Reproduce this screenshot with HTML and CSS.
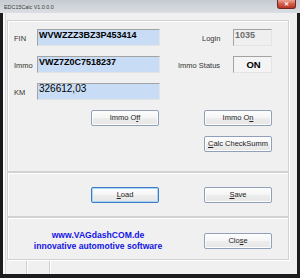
FILE: index.html
```html
<!DOCTYPE html>
<html lang="en">
<head>
    <meta charset="UTF-8">
    <title>EDC15Calc V1.0.0.0</title>
    <link rel="stylesheet" href="styles.css">
</head>
<body>
    <div class="window">
        <div class="titlebar">
            <span class="title">EDC15Calc V1.0.0.0</span>
            <span class="close">&#x2715;</span>
        </div>
        <div class="client">
            <div class="panels">
                <div class="panel panel-main">
                    <div class="field-row">
                        <span class="lbl">FIN</span>
                        <div class="entry bold">WVWZZZ3BZ3P453414</div>
                        <span class="side-lbl login">Login</span>
                        <div class="readonly">1035</div>
                    </div>
                    <div class="field-row">
                        <span class="lbl">Immo</span>
                        <div class="entry bold">VWZ7Z0C7518237</div>
                        <span class="side-lbl">Immo Status</span>
                        <div class="status-box">ON</div>
                    </div>
                    <div class="field-row">
                        <span class="lbl">KM</span>
                        <div class="entry km">326612,03</div>
                    </div>
                    <div class="btn-row first">
                        <button class="btn">Immo O<u>f</u>f</button>
                        <button class="btn">Immo O<u>n</u></button>
                    </div>
                    <div class="btn-row right-only">
                        <button class="btn"><u>C</u>alc CheckSumm</button>
                    </div>
                </div>
                <div class="panel panel-file">
                    <div class="btn-row">
                        <button class="btn default"><u>L</u>oad</button>
                        <button class="btn"><u>S</u>ave</button>
                    </div>
                </div>
                <div class="panel panel-info">
                    <div class="promo">
                        <div>www.VAGdashCOM.de</div>
                        <div>innovative automotive software</div>
                    </div>
                    <button class="btn close-btn">Clo<u>s</u>e</button>
                </div>
            </div>
            <div class="statusbar">
                <span class="seg seg1"></span>
                <span class="seg seg2"></span>
                <span class="seg seg3"></span>
            </div>
        </div>
    </div>
</body>
</html>
```

FILE: styles.css
```css
body {
    margin: 0;
    padding: 0;
    font-family: "Liberation Sans", Arial, sans-serif;
}
.window {
    width: 300px;
    height: 278px;
    display: flex;
    flex-direction: column;
    background: #1c1c1e;
}
.titlebar {
    height: 13px;
    flex-shrink: 0;
    display: flex;
    align-items: flex-start;
    padding-left: 4px;
    background: linear-gradient(#c6cbd1, #dadee3);
}
.title {
    font-size: 5.4px;
    color: #3a3a3a;
    margin-top: 4px;
}
.close {
    margin-left: auto;
    margin-right: 4px;
    width: 19px;
    height: 9px;
    box-sizing: border-box;
    border: 1px solid #6a2a24;
    border-top: none;
    border-radius: 0 0 3px 3px;
    background: linear-gradient(#eba596, #d45a48 50%, #b83524);
    color: #fff;
    font-size: 6px;
    font-weight: bold;
    line-height: 8px;
    text-align: center;
}
.client {
    flex: 1;
    margin: 0 3px 4px;
    display: flex;
    flex-direction: column;
    background: #f0f0f0;
    box-shadow: inset 2px 0 0 #fafafa, inset 3px 0 0 #d8d8d8;
}
.panels {
    padding: 7px 8px 0 4px;
}
.panel {
    box-sizing: border-box;
    border: 1px solid #d2d2d2;
    box-shadow: inset 1px 1px 0 #fff, 1px 1px 0 #fff;
}
.panel-main {
    height: 152px;
    padding-top: 8px;
}
.panel-file {
    height: 45px;
    padding-top: 14px;
}
.panel-info {
    height: 43px;
    padding-top: 4px;
    display: flex;
    align-items: center;
}
.field-row {
    display: flex;
    height: 17px;
    margin-bottom: 10px;
}
.lbl, .side-lbl {
    font-size: 7.5px;
    color: #333;
    align-self: center;
    padding-top: 2px;
}
.lbl {
    width: 29px;
    padding-left: 6px;
    box-sizing: border-box;
}
.side-lbl {
    width: 55px;
    margin-left: 18px;
    box-sizing: border-box;
}
.side-lbl.login {
    padding-left: 24px;
}
.entry, .readonly, .status-box {
    height: 17px;
    box-sizing: border-box;
    border: 1px solid;
    border-color: #a3a3a3 #e4e4e4 #e4e4e4 #a3a3a3;
    line-height: 10px;
    white-space: nowrap;
}
.entry {
    width: 123px;
    padding-left: 1px;
    background: #c8ddf5;
    color: #000;
    font-size: 9px;
}
.entry.bold {
    font-weight: bold;
}
.entry.km {
    font-size: 10px;
}
.readonly {
    width: 39px;
    padding-left: 1px;
    background: #efefef;
    color: #6d6d6d;
    font-size: 9px;
    font-weight: bold;
}
.status-box {
    width: 39px;
    background: #f4f4f4;
    font-size: 9.5px;
    font-weight: bold;
    line-height: 15px;
    text-align: center;
    padding-left: 2px;
}
.btn-row {
    display: flex;
    gap: 45px;
    padding-left: 83px;
    margin-bottom: 10px;
}
.btn-row.first {
    margin-top: 7px;
}
.btn-row.right-only {
    padding-left: 196px;
}
.btn {
    width: 68px;
    height: 16px;
    padding: 0;
    box-sizing: border-box;
    border: 1px solid #8fa0b8;
    border-radius: 2px;
    background: linear-gradient(#fdfdfd, #f5f5f5 50%, #ededed 51%, #e6e6e6);
    box-shadow: inset 0 0 0 1px #fdfdfd;
    font-family: "Liberation Sans", Arial, sans-serif;
    font-size: 7.5px;
    color: #222;
    line-height: 14px;
}
.btn.default {
    border-color: #3d7bc4;
    box-shadow: inset 0 0 0 1px #a9d6f4;
}
.promo {
    width: 180px;
    text-align: center;
    color: #1414e6;
    font-size: 8.6px;
    font-weight: bold;
    line-height: 10.5px;
}
.close-btn {
    margin-left: 16px;
}
.statusbar {
    flex: 1;
    display: flex;
    margin-top: 1px;
}
.seg {
    border-right: 1px solid #cfcfcf;
    box-shadow: 1px 0 0 #fff;
}
.seg1 {
    width: 23px;
}
.seg2 {
    width: 22px;
}
.seg3 {
    flex: 1;
    border-right: none;
    box-shadow: none;
}
```
